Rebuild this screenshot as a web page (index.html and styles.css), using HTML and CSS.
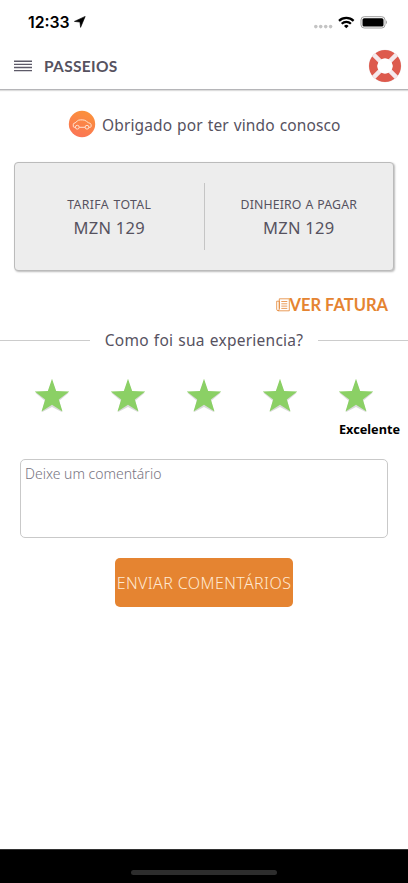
FILE: index.html
```html
<!DOCTYPE html>
<html lang="pt">
<head>
<meta charset="utf-8">
<meta name="viewport" content="width=device-width">
<title>Passeios</title>
<link rel="stylesheet" href="styles.css">
</head>
<body>
<svg class="defs" width="0" height="0" aria-hidden="true">
  <symbol id="star" viewBox="0 0 36 36">
    <path d="M18 2.6l4.3 11 12.4 1.2-9.4 8 2.9 11.4L18 29l-10.2 5.2 2.9-11.4-9.4-8 12.4-1.2z" fill="#dadada"/>
    <path d="M18 .8l4.1 12.3 13.2.3-10.5 8.1 3.7 12.1L18 26.8 7.5 33.6l3.7-12.1L.7 13.4l13.2-.3z" fill="#8bd065"/>
  </symbol>
</svg>
<header>
  <div class="status">
    <span class="time">12:33</span>
    <svg class="arrow" width="12" height="12" viewBox="0 0 12 12"><path d="M11.2.4L6.6 11.4 5.9 6.1.4 5.4z" stroke="#000" stroke-width=".6" stroke-linejoin="round"/></svg>
    <svg class="system" width="74" height="14" viewBox="0 0 74 14">
      <g fill="#c4c4c4"><circle cx="2.8" cy="10.6" r="1.8"/><circle cx="7.7" cy="10.6" r="1.8"/><circle cx="12.7" cy="10.6" r="1.8"/><circle cx="17.6" cy="10.6" r="1.8"/></g>
      <g fill="none" stroke="#000" stroke-width="2.2"><path d="M26 4.9a10.4 10.4 0 0 1 14.6 0"/><path d="M28.7 7.8a6.5 6.5 0 0 1 9.2 0"/></g>
      <path d="M33.3 12.2l-2.3-2.3a3.3 3.3 0 0 1 4.6 0z"/>
      <rect x="48" y=".7" width="24" height="11.3" rx="3.2" fill="#fff" stroke="#9d9d9d"/>
      <rect x="49.5" y="2.2" width="21" height="8.3" rx="1.6"/>
      <path d="M73 4.3q2 2 0 4z" fill="#9d9d9d"/>
    </svg>
  </div>
  <div class="bar">
    <svg class="menu" width="18" height="12" viewBox="0 0 18 12"><path d="M0 1.3h18M0 4.4h18M0 7.5h18M0 10.6h18" stroke="#5d5a68" stroke-width="1.4"/></svg>
    <h1>PASSEIOS</h1>
    <svg class="buoy" width="34" height="34" viewBox="0 0 34 34">
      <circle cx="17" cy="17" r="16" fill="none" stroke="#e8e5ea" stroke-width=".8"/>
      <circle cx="17" cy="17" r="11.8" fill="none" stroke="#dd5a4d" stroke-width="8.4"/>
      <path d="M5.6 5.6l6.5 6.5M28.4 5.6l-6.5 6.5M5.6 28.4l6.5-6.5M28.4 28.4l-6.5-6.5" stroke="#f5e9ec" stroke-width="4.4"/>
      <circle cx="17" cy="17" r="7.6" fill="#fff"/>
    </svg>
  </div>
</header>
<main>
  <div class="thanks">
    <svg width="28" height="28" viewBox="0 0 28 28">
      <defs><linearGradient id="g" x1=".7" y1="0" x2=".3" y2="1"><stop stop-color="#fb923a"/><stop offset="1" stop-color="#fb7456"/></linearGradient></defs>
      <circle cx="14" cy="14" r="13.2" fill="url(#g)"/>
      <g fill="none" stroke="#ffe3d0" stroke-width="1"><path d="M7.5 17.3H6.1q-.8 0-.8-1v-2.1q0-1 1.8-1.3l2.1-1.8q1-1.2 3.2-1.2h2.4q2 0 3.8 1.5l1.7 1.3q2.8.4 2.8 2v1.7q0 .9-.9.9h-1.4M11.2 17.3h6"/><circle cx="9.3" cy="17.2" r="1.9"/><circle cx="19" cy="17.2" r="1.9"/></g>
    </svg>
    <span class="t obrigado">Obrigado por ter vindo conosco</span>
  </div>
  <section class="fares">
    <div class="fare"><span class="t label tarifa">TARIFA TOTAL</span><span class="t amount">MZN 129</span></div>
    <div class="fare"><span class="t label dinheiro">DINHEIRO A PAGAR</span><span class="t amount">MZN 129</span></div>
  </section>
  <div class="invoice">
    <svg width="14" height="14" viewBox="0 0 14 14" fill="none" stroke="#e58431" stroke-width=".8"><path d="M3.3 10.8V.8h10v12H2.2Q.7 12.8.7 11V3.2h2.6v7.6q0 1.7-1.3 2M5.3 3.5h6M5.3 5.8h6M5.3 8.1h6M5.3 10.4h6"/></svg>
    <span class="t">VER FATURA</span>
  </div>
  <div class="question"><i></i><span class="t como">Como foi sua experiencia?</span><i></i></div>
  <div class="stars">
    <svg><use href="#star"/></svg><svg><use href="#star"/></svg><svg><use href="#star"/></svg><svg><use href="#star"/></svg><svg><use href="#star"/></svg>
  </div>
  <div class="rating"><span class="t">Excelente</span></div>
  <div class="comment"><span class="t">Deixe um comentário</span></div>
  <button><span class="t enviar">ENVIAR COMENTÁRIOS</span></button>
</main>
<footer><i></i></footer>
</body>
</html>
```
FILE: styles.css
```css
* { box-sizing: border-box; }
body { margin: 0; height: 883px; display: flex; flex-direction: column; background: #fff; color: #56525f; font-family: "Noto Sans", sans-serif; overflow: hidden; }
.defs { display: none; }
.t { display: block; white-space: nowrap; }
header { height: 90px; border-bottom: 1px solid #b5b5b8; box-shadow: 0 1px 1px #ddd; }
.status { display: flex; height: 44px; padding-left: 28px; color: #000; }
.time { width: 46px; padding-top: 12px; font: 600 15.8px/21px Inter, sans-serif; }
.arrow { margin-top: 16px; }
.system { margin: 16px 21px 0 auto; overflow: visible; }
.bar { display: flex; align-items: center; height: 44px; padding: 0 6px 0 14px; }
.menu { margin-right: 12px; }
h1 { margin: 0; padding-bottom: 1px; font: 700 15.5px/20px Lato, sans-serif; letter-spacing: .3px; }
.buoy { margin-left: auto; }
main { flex: 1; }
.thanks { display: flex; padding: 20px 0 0 68px; gap: 6px; font-size: 15.5px; line-height: 29px; }
.obrigado { letter-spacing: .12px; word-spacing: .8px; padding-top: 1px; }
.fares { display: flex; height: 109px; margin: 22px 14px 0; padding: 20px 0; background: #ededed; border: 1px solid #bbb; border-radius: 4px; box-shadow: 1px 1px 2px #bbb; }
.fare { flex: 1; display: flex; flex-direction: column; align-items: center; padding-top: 11px; }
.fare + .fare { border-left: 1px solid #c5c5c5; }
.label { font-size: 12.3px; line-height: 21px; }
.tarifa { letter-spacing: .35px; word-spacing: 1px; }
.dinheiro { letter-spacing: .15px; word-spacing: .5px; }
.amount { font-size: 16.5px; line-height: 26px; letter-spacing: .3px; }
.invoice { display: flex; justify-content: flex-end; align-items: center; height: 24px; margin: 22px 20px 0 0; color: #e58431; font: 700 16.5px/24px Lato, sans-serif; }
.question { display: flex; align-items: center; justify-content: space-between; height: 26px; margin-top: 10px; font-size: 15.5px; }
.question i { width: 90px; height: 1px; background: #ccc; }
.como { letter-spacing: .24px; word-spacing: .8px; }
.stars { display: flex; justify-content: space-between; padding: 0 34px; margin-top: 25px; }
.stars svg { width: 36px; height: 36px; }
.rating { display: flex; justify-content: flex-end; height: 20px; margin: 5px 8px 0 0; color: #000; font-size: 12.7px; line-height: 20px; font-weight: 700; }
.comment { height: 79px; margin: 20px 20px 0; padding: 4px; border: 1px solid #c9c9c9; border-radius: 5px; color: #77747f; font-size: 14px; line-height: 20px; font-weight: 300; }
button { display: flex; align-items: center; justify-content: center; width: 178px; height: 49px; margin: 20px auto 0 115px; padding: 0; border: 0; border-radius: 5px; background: #e58431; color: #ffe9d3; font: 300 16px/24px "Noto Sans", sans-serif; }
.enviar { letter-spacing: .4px; }
footer { height: 34px; background: #000; border-top: 1px solid #333; display: flex; justify-content: center; padding-top: 20px; }
footer i { width: 146px; height: 5px; border-radius: 3px; background: #2d2d2d; }
```
